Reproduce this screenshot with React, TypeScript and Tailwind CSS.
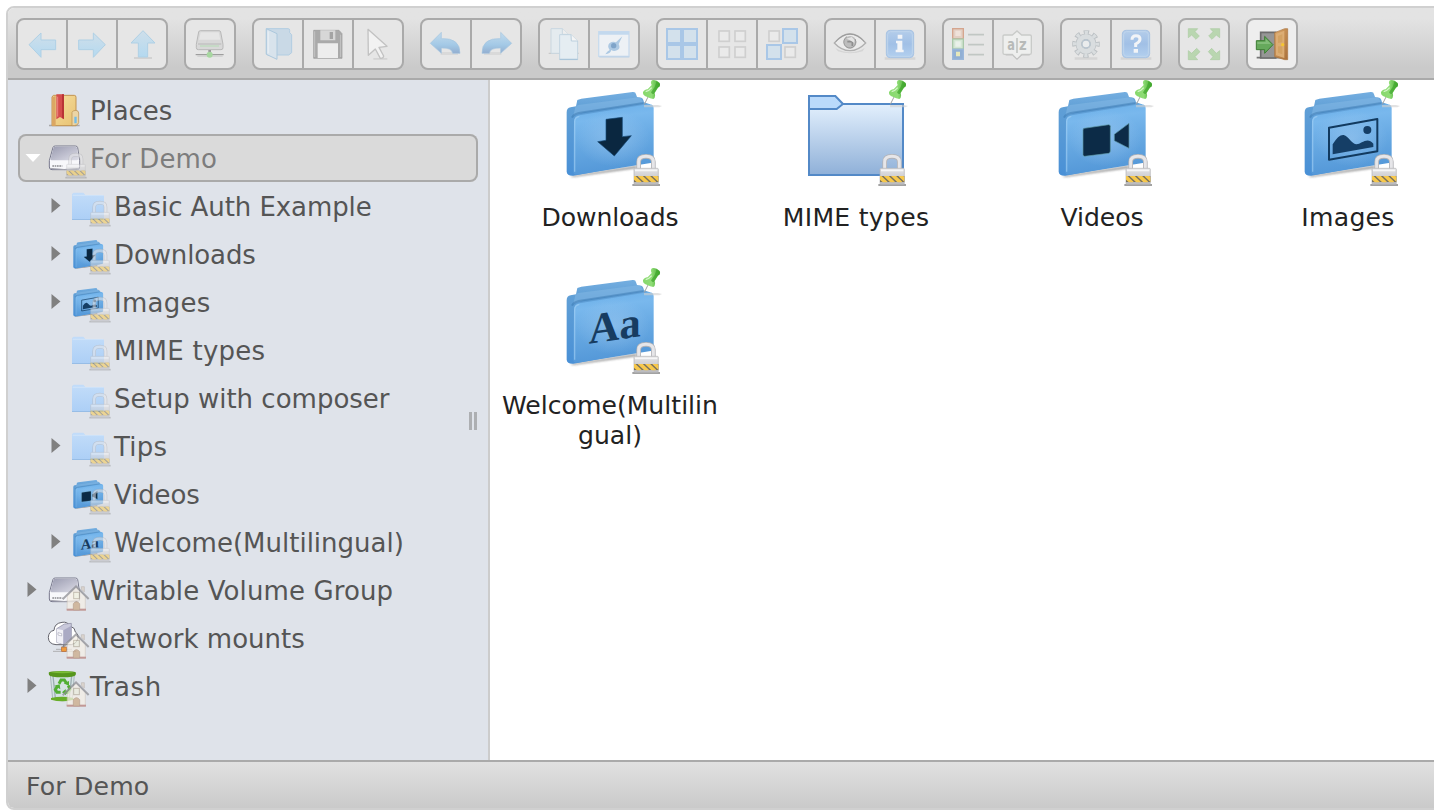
import React from "react";

type Glyph = "down" | "video" | "image" | "aa";

const Defs = () => (
  <svg className="absolute h-0 w-0" aria-hidden="true">
    <defs>
      <linearGradient id="front" x1="0" y1="0" x2="0.15" y2="1">
        <stop offset="0" stopColor="#67aee9" />
        <stop offset="0.25" stopColor="#79b8ed" />
        <stop offset="0.6" stopColor="#66a8e2" />
        <stop offset="1" stopColor="#5498d8" />
      </linearGradient>
      <radialGradient id="glow" cx="0.5" cy="0.5" r="0.5">
        <stop offset="0" stopColor="#a5cdf2" stopOpacity="0.5" />
        <stop offset="1" stopColor="#a5cdf2" stopOpacity="0" />
      </radialGradient>
      <linearGradient id="back" x1="0" y1="0" x2="0" y2="1">
        <stop offset="0" stopColor="#74aee0" />
        <stop offset="0.2" stopColor="#609fd6" />
        <stop offset="1" stopColor="#4990d6" />
      </linearGradient>
      <linearGradient id="plain" x1="0" y1="0" x2="0" y2="1">
        <stop offset="0" stopColor="#e3f0fd" />
        <stop offset="1" stopColor="#8fb0d8" />
      </linearGradient>
      <linearGradient id="soft" x1="0" y1="0" x2="0" y2="1">
        <stop offset="0" stopColor="#c2dcf9" />
        <stop offset="1" stopColor="#accff6" />
      </linearGradient>
      <linearGradient id="metal" x1="0" y1="0" x2="0" y2="1">
        <stop offset="0" stopColor="#e4e4e6" />
        <stop offset="1" stopColor="#bcbcc0" />
      </linearGradient>
      <linearGradient id="diskTop" x1="0" y1="0" x2="1" y2="1">
        <stop offset="0" stopColor="#9a9bb0" />
        <stop offset="1" stopColor="#dedee8" />
      </linearGradient>
      <linearGradient id="gold" x1="0" y1="0" x2="1" y2="1">
        <stop offset="0" stopColor="#f6dfa0" />
        <stop offset="1" stopColor="#e8c272" />
      </linearGradient>
      <linearGradient id="sky" x1="0" y1="0" x2="0" y2="1">
        <stop offset="0" stopColor="#cfdfea" />
        <stop offset="1" stopColor="#b4d9f0" />
      </linearGradient>
      <linearGradient id="undo" x1="0" y1="0" x2="0" y2="1">
        <stop offset="0" stopColor="#c3dbed" />
        <stop offset="0.6" stopColor="#a3c9e6" />
        <stop offset="1" stopColor="#93aed0" />
      </linearGradient>
      <linearGradient id="info" x1="0" y1="0" x2="0" y2="1">
        <stop offset="0" stopColor="#b4cdea" />
        <stop offset="0.5" stopColor="#a1c0e6" />
        <stop offset="1" stopColor="#b3d0ef" />
      </linearGradient>
      <linearGradient id="door" x1="0" y1="0" x2="1" y2="1">
        <stop offset="0" stopColor="#dba768" />
        <stop offset="1" stopColor="#a9703a" />
      </linearGradient>
      <linearGradient id="pin" x1="0" y1="0" x2="1" y2="0">
        <stop offset="0" stopColor="#86d86c" />
        <stop offset="0.5" stopColor="#8fdc76" />
        <stop offset="1" stopColor="#43a82e" />
      </linearGradient>
      <filter id="blur2" x="-20%" y="-50%" width="140%" height="200%">
        <feGaussianBlur stdDeviation="3" />
      </filter>
      <clipPath id="stripes">
        <rect x="432" y="303" width="73" height="19" />
      </clipPath>
    </defs>
  </svg>
);

/* ---------- volume and folder artwork ---------- */

const Lock = () => (
  <g>
    <path d="M427 327h83v6h-83z" fill="#8b8b8b" opacity="0.8" />
    <path d="M446 284V260Q446 244 468 244Q490 244 490 260V284" fill="none" stroke="#b3b3b7" strokeWidth="14" />
    <path d="M446 284V260Q446 244 468 244Q490 244 490 260V284" fill="none" stroke="#e6e6e9" strokeWidth="9" />
    <rect x="432" y="280" width="73" height="48" rx="3" fill="url(#metal)" stroke="#b3b3b7" strokeWidth="2" />
    <path d="M435 286h67" stroke="#f6f6f7" strokeWidth="5" />
    <g clipPath="url(#stripes)">
      <path d="M430 303h78v19h-78z" fill="#77705f" />
      <path d="M425 300l26 24M447 300l26 24M469 300l26 24M491 300l26 24" stroke="#f7c84c" strokeWidth="11" />
    </g>
  </g>
);

const Pin = () => (
  <g>
    <path d="M462 90h42l12 3-8 4h-46z" fill="#cfcfcf" opacity="0.6" />
    <path d="M474 66L463 88" stroke="#a3a3a3" strokeWidth="3" />
    <path d="M486 16Q497 12 509 24Q513 33 504 38L494 54Q498 66 490 72Q480 71 472 66Q458 62 459 52Q462 44 473 43L485 30Q480 20 486 16Z" fill="url(#pin)" />
    <path d="M500 19Q512 26 509 34L502 38L492 56Q486 59 483 52L494 36Z" fill="#3fa52c" opacity="0.7" />
    <path d="M467 50Q477 48 485 38" stroke="#d5f5c9" strokeWidth="4" fill="none" />
  </g>
);

const GlyphArt = ({ kind }: { kind: Glyph }) => {
  if (kind === "down")
    return (
      <path d="M348 133L397 127V185L424 182L373 243L323 200L348 196Z" fill="#0a2740" stroke="#174a77" strokeWidth="2" />
    );
  if (kind === "video")
    return (
      <g fill="#0c2b47" stroke="#5d99a6" strokeWidth="2">
        <path d="M306 160L380 149Q385 149 385 154V228Q385 234 380 235L308 244Q303 244 303 238V165Q303 161 306 160Z" />
        <path d="M397 178L441 145V220L397 197Z" />
      </g>
    );
  if (kind === "image")
    return (
      <g>
        <path d="M303 158L448 132V229L303 254Z" fill="none" stroke="#123a5f" strokeWidth="6" strokeLinejoin="round" />
        <path d="M314 208Q332 178 347 180C362 184 372 208 386 208C400 207 418 184 436 206V216L314 238Z" fill="#153e66" />
        <circle cx="418" cy="165" r="12" fill="#153e66" />
      </g>
    );
  return (
    <text
      transform="matrix(1 -0.14 0 1 296 242)"
      fontFamily="'Liberation Serif', serif"
      fontSize="130"
      fontWeight="700"
      textLength="156"
      lengthAdjust="spacingAndGlyphs"
      x="0"
      y="0"
      fill="#173c61"
    >
      Aa
    </text>
  );
};

const BlueFolder = ({ kind }: { kind: Glyph }) => (
  <g>
    <path d="M240 303L440 272L440 280L250 306Z" fill="#333" opacity="0.5" filter="url(#blur2)" />
    <path d="M230 112Q230 99 242 97L258 94L262 75L274 71L428 51Q437 50 438 58L441 66L454 68Q460 70 462 82L480 88L480 260L250 302Q231 303 230 290Z" fill="url(#back)" />
    <path d="M264 90L450 66L460 84L280 112L250 122L256 96Z" fill="#85b9e6" opacity="0.5" />
    <path d="M246 128Q250 118 266 114L460 84" fill="none" stroke="#2f6ea8" strokeWidth="6" opacity="0.4" />
    <path d="M252 140Q252 124 268 121L474 88Q491 86 491 100V253Q491 262 482 264L262 299Q250 300 250 290Z" fill="url(#front)" />
    <path d="M254 290V140Q254 127 268 124" stroke="#a4d0f5" strokeWidth="4" fill="none" opacity="0.6" />
    <ellipse cx="370" cy="190" rx="110" ry="85" fill="url(#glow)" />
    <GlyphArt kind={kind} />
  </g>
);

const BigIcon = ({ kind }: { kind: Glyph | "plain" }) => (
  <svg viewBox="180 15 360 336" className="h-28 w-[120px] shrink-0">
    {kind === "plain" ? (
      <g strokeWidth="6" stroke="#5389c7">
        <rect x="219" y="87" width="282" height="213" fill="url(#plain)" />
        <path d="M219 63H298L321 87L302 102H219Z" fill="#badafb" />
      </g>
    ) : (
      <BlueFolder kind={kind} />
    )}
    <Pin />
    <Lock />
  </svg>
);

const SmallLock = () => (
  <g transform="matrix(.77 0 0 .8 -276.8 -133)" opacity="0.55">
    <Lock />
  </g>
);

const House = () => (
  <g opacity="0.75">
    <path d="M58 90L84 64L112 90V132H57Z" fill="#f5efe6" stroke="#cdc3b7" strokeWidth="2" />
    <path d="M56 128h58v6h-58z" fill="#b9807a" />
    <path d="M44 100L84 61L122 99" fill="none" stroke="#8f8f94" strokeWidth="6" />
    <path d="M100 62h9v16l-9-8z" fill="#d9cfc5" stroke="#a89c94" strokeWidth="1.5" />
    <rect x="77" y="79" width="17" height="19" fill="#eeeedd" stroke="#b6ad9b" strokeWidth="3" />
    <path d="M76 132V113Q85 101 95 113V132Z" fill="#ccaa88" stroke="#a88970" strokeWidth="2" />
  </g>
);

const Disk = () => (
  <g>
    <path d="M15 40Q16 36 22 36H82Q88 36 89 41L95 80V98Q95 107 88 107H12Q4 107 4 99V80Z" fill="#f8f8fb" stroke="#77788c" strokeWidth="3" />
    <path d="M17 40Q18 38 23 38H81Q86 38 87 42L92 73Q93 79 86 79H13Q6 79 8 73Z" fill="url(#diskTop)" />
    <path d="M13 96h30" stroke="#8c8c91" strokeWidth="5" strokeDasharray="5 2" />
    <path d="M6 103Q48 110 93 103" stroke="#a5a5af" strokeWidth="3" fill="none" />
  </g>
);

type TreeKind = Glyph | "plain" | "places" | "disk" | "group" | "network" | "trash";

const TreeIcon = ({ kind }: { kind: TreeKind }) => {
  let art: React.ReactNode;
  if (kind === "places")
    art = (
      <g>
        <path d="M3 116h92v5h-92z" fill="#84817e" opacity="0.6" />
        <path d="M12 33L16 28H79Q84 28 84 34V119H12Z" fill="url(#gold)" stroke="#c29350" strokeWidth="3" />
        <path d="M12 33V119H23V30Z" fill="#dba763" />
        <path d="M72 79Q74 73 84 73Q92 74 92 81V110Q90 119 72 119Z" fill="#ecd5a5" stroke="#b58b4b" strokeWidth="2" />
        <path d="M79 92h7v20h-7z" fill="#72bce8" />
        <path d="M25 25H48V100L36 93L25 100Z" fill="#d54c4c" />
        <path d="M42 25h6v74l-6-3z" fill="#b93335" />
        <path d="M29 32v60" stroke="#ea8580" strokeWidth="3" />
      </g>
    );
  else if (kind === "disk" || kind === "group")
    art = (
      <>
        <Disk />
        {kind === "disk" ? <SmallLock /> : <House />}
      </>
    );
  else if (kind === "network")
    art = (
      <>
        <path d="M24 92Q1 90 1 70Q2 52 18 49Q19 28 42 25Q58 22 66 36Q83 42 82 54Q94 62 88 78Q84 90 70 92Z" fill="#fff" stroke="#65656d" strokeWidth="3" />
        <path d="M26 44L49 30L70 28L70 76L46 91L26 85Z" fill="#c9c9db" stroke="#86869d" strokeWidth="2" />
        <path d="M26 44L46 49V91L26 85Z" fill="#f0f0f6" />
        <path d="M30 56l11 3v7l-11-3z" fill="#fff" stroke="#9191a5" strokeWidth="1.5" />
        <path d="M46 91V49L70 35V76Z" fill="#aaaac4" />
        <path d="M47 92v12" stroke="#5b5b5b" strokeWidth="3" />
        <path d="M15 112h70M24 106h48" stroke="#9a9a9a" strokeWidth="3" opacity="0.7" />
        <rect x="41" y="99" width="14" height="13" fill="#ef9b3d" stroke="#b8642c" strokeWidth="2" />
        <House />
      </>
    );
  else if (kind === "trash")
    art = (
      <>
        <path d="M7 39H79L73 111Q44 122 14 111Z" fill="#d5e2e4" stroke="#8fa2a5" strokeWidth="2" />
        <path d="M15 42L22 108M71 42L64 108" stroke="#758e91" strokeWidth="4" opacity="0.6" />
        <path d="M2 32Q2 27 43 27Q84 27 84 32L83 39Q79 46 43 46Q7 46 3 39Z" fill="#56961d" />
        <path d="M8 31Q43 25 78 31Q43 37 8 31Z" fill="#7bbd37" />
        <path d="M9 108Q43 101 76 108V113Q43 123 9 113Z" fill="#68ae28" />
        <g fill="none" stroke="#51af34" strokeWidth="9">
          <path d="M33 65L39 54H49L55 63" />
          <path d="M61 71L66 82L60 91H49" />
          <path d="M38 91H27L22 83L29 71" />
        </g>
        <path d="M47 64l16-7v15zM53 81l-11 10 12 9zM19 71l16-4 2 15z" fill="#51af34" />
        <House />
      </>
    );
  else if (kind === "plain")
    art = (
      <>
        <path d="M0 114V36L5 32H34L40 39H91Q96 39 96 43V107L92 114Z" fill="url(#soft)" />
        <path d="M0 111h94v3h-94z" fill="#8eb5df" opacity="0.7" />
        <path d="M2 40H94" stroke="#e0edfb" strokeWidth="3" opacity="0.5" />
        <SmallLock />
      </>
    );
  else
    art = (
      <>
        <g transform="matrix(.343 0 0 .338 -75 13.1)">
          <BlueFolder kind={kind} />
        </g>
        <SmallLock />
      </>
    );
  return (
    <svg viewBox="0 0 120 144" className="h-12 w-10 shrink-0 overflow-visible">
      {art}
    </svg>
  );
};

/* ---------- toolbar artwork: each icon sits in its own 96 unit box ---------- */

const Frame = ({ x, children }: { x: number; children: React.ReactNode }) => (
  <svg viewBox={`${x} 84 96 96`} className="h-8 w-8 shrink-0 overflow-visible">
    {children}
  </svg>
);

const arrowProps = { fill: "url(#sky)", stroke: "#afd0e5", strokeWidth: 3, strokeLinejoin: "round" as const };

const toolbar: React.ReactNode[][] = [
  [
    <Frame x={78}>
      <path d="M87 134L123 99V120H167V149H123V172Z" {...arrowProps} />
    </Frame>,
    <Frame x={228}>
      <path d="M316 134L280 99V120H236V149H280V172Z" {...arrowProps} />
    </Frame>,
    <Frame x={378}>
      <path d="M402 171h54v6h-54z" fill="#c9c9c9" opacity="0.7" />
      <path d="M429 92L465 129H443V171H415V129H393Z" {...arrowProps} />
    </Frame>,
  ],
  [
    <Frame x={582}>
      <path d="M601 92H657Q661 92 662 96L669 133V143Q669 149 663 149H595Q589 149 589 143V133L596 96Q597 92 601 92Z" fill="#d8d8d8" stroke="#b8b8b8" strokeWidth="3" />
      <path d="M602 97h54l5 22h-64z" fill="#e6e6e6" />
      <path d="M594 132h70" stroke="#c3c3c3" strokeWidth="4" />
      <path d="M600 138h57" stroke="#b4dcb4" strokeWidth="3" />
      <path d="M587 164h84" stroke="#919191" strokeWidth="3" />
      <path d="M592 168h76" stroke="#cecece" strokeWidth="5" />
      <path d="M629 150v15" stroke="#999" strokeWidth="8" />
      <circle cx="629" cy="164" r="9" fill="#a7d7a0" />
    </Frame>,
  ],
  [
    <Frame x={786}>
      <path d="M799 86H865Q869 86 869 91V98L875 104V158L866 165H804L799 162Z" fill="#c9d9e6" stroke="#b1cde2" strokeWidth="3" />
      <path d="M799 86L831 101V178L799 163Z" fill="#d8e3ec" stroke="#acc8dd" strokeWidth="3" />
      <path d="M805 94V160" stroke="#e5edf3" strokeWidth="5" />
    </Frame>,
    <Frame x={936}>
      <path d="M941 91H1017L1026 101V175H941Z" fill="#aaa" stroke="#999" strokeWidth="2" />
      <path d="M961 91H1006V121H961Z" fill="#d7d7d7" />
      <path d="M989 96h10v21h-10z" fill="#a4a4a4" />
      <path d="M953 130H1014V174H953Z" fill="#ededed" />
      <path d="M944 94v77M1022 104v67" stroke="#c4c4c4" strokeWidth="3" />
    </Frame>,
    <Frame x={1086}>
      <path d="M1120 174h42v5h-42z" fill="#ccc" opacity="0.7" />
      <path d="M1104 88L1161 139L1137 142L1151 168Q1150 176 1141 175L1126 147L1105 166Z" fill="#f2f2f2" stroke="#c2c2c2" strokeWidth="4" strokeLinejoin="round" />
    </Frame>,
  ],
  [
    <Frame x={60}>
      <path d="M92 156h52v9h-52z" fill="#ccc" opacity="0.5" />
      <path d="M61 130L94 97V116Q150 113 150 160H128Q126 143 94 144V160Z" fill="url(#undo)" stroke="#a6c5e0" strokeWidth="2" strokeLinejoin="round" />
    </Frame>,
    <Frame x={210}>
      <path d="M222 156h52v9h-52z" fill="#ccc" opacity="0.5" />
      <path d="M305 130L272 97V116Q216 113 216 160H238Q240 143 272 144V160Z" fill="url(#undo)" stroke="#a6c5e0" strokeWidth="2" strokeLinejoin="round" />
    </Frame>,
  ],
  [
    <Frame x={414}>
      <path d="M416 160h90" stroke="#cacaca" strokeWidth="4" />
      <path d="M423 86H457L475 103V160H423Z" fill="#e4ebef" stroke="#c9d7e0" strokeWidth="3" />
      <path d="M457 86V103H475" fill="#eee" stroke="#c9d7e0" strokeWidth="3" />
      <path d="M449 104H483L503 123V179H449Z" fill="#e5edf2" stroke="#c3d5e1" strokeWidth="3" />
      <path d="M483 104L484 123H503" fill="#f5f5f5" stroke="#bbcfdd" strokeWidth="3" />
      <path d="M449 178h54" stroke="#aac5d9" strokeWidth="4" />
    </Frame>,
    <Frame x={564}>
      <rect x="566" y="95" width="91" height="74" fill="#edf1f5" stroke="#c9dced" strokeWidth="4" />
      <path d="M566 94h91v10h-91z" fill="#c3d9ee" />
      <path d="M568 171h90" stroke="#b9cfe5" strokeWidth="3" />
      <path d="M586 163Q591 154 599 150Q590 138 599 129Q609 122 618 127L637 109L626 132Q633 146 621 151Q611 156 604 150Q601 161 586 163Z" fill="#adc9e3" />
      <circle cx="611" cy="137" r="8" fill="#7fa4c9" />
    </Frame>,
  ],
  [
    <Frame x={768}>
      <g fill="#d3e1ec" stroke="#a9c7e7" strokeWidth="6">
        <rect x="771" y="87" width="42" height="42" /><rect x="819" y="87" width="42" height="42" />
        <rect x="771" y="135" width="42" height="42" /><rect x="819" y="135" width="42" height="42" />
      </g>
    </Frame>,
    <Frame x={918}>
      <g fill="#eaeaea" stroke="#cfcfcf" strokeWidth="5">
        <rect x="927" y="93" width="31" height="31" /><rect x="975" y="93" width="31" height="31" />
        <rect x="927" y="141" width="31" height="31" /><rect x="975" y="141" width="31" height="31" />
      </g>
    </Frame>,
    <Frame x={1068}>
      <g fill="#eaeaea" stroke="#cfcfcf" strokeWidth="5">
        <rect x="1077" y="93" width="31" height="31" /><rect x="1125" y="141" width="31" height="31" />
      </g>
      <g fill="#d3e1ec" stroke="#a9c7e7" strokeWidth="6">
        <rect x="1119" y="87" width="42" height="42" /><rect x="1071" y="135" width="42" height="42" />
      </g>
    </Frame>,
  ],
  [
    <Frame x={72}>
      <path d="M76 144Q120 170 164 144L158 154Q120 166 84 154Z" fill="#c9c9c9" opacity="0.6" />
      <path d="M73 129Q96 102 120 102Q145 102 167 129Q145 152 120 152Q94 152 73 129Z" fill="#ebebeb" stroke="#b0b0b0" strokeWidth="4" />
      <path d="M77 125Q98 102 120 102Q142 102 163 125" fill="none" stroke="#999" strokeWidth="3" />
      <circle cx="120" cy="127" r="19" fill="#bcbcbc" />
      <path d="M111 110A18 18 0 1 0 135 117" fill="none" stroke="#999" strokeWidth="3" />
      <path d="M112 125h15v13" fill="none" stroke="#8e8e8e" strokeWidth="5" />
      <path d="M109 116l16-5 8 8v10l-14-9z" fill="#e4e4e4" />
    </Frame>,
    <Frame x={222}>
      <path d="M224 172h92v7h-92z" fill="#c9c9c9" opacity="0.6" />
      <rect x="229" y="91" width="82" height="82" rx="12" fill="url(#info)" stroke="#a8c3e2" strokeWidth="3" />
      <rect x="233" y="95" width="74" height="74" rx="9" fill="none" stroke="#bfd5ec" strokeWidth="3" />
      <path d="M263 104h14v12h-14zM258 122h19v27h4v8h-24v-8h5v-19h-4z" fill="#f2f4f7" />
    </Frame>,
  ],
  [
    <Frame x={426}>
      <rect x="428" y="86" width="32" height="30" fill="#e3cfc4" stroke="#d5a58e" strokeWidth="4" />
      <rect x="428" y="117" width="32" height="30" fill="#d4e6d4" stroke="#aac8aa" strokeWidth="4" />
      <rect x="428" y="148" width="32" height="30" fill="#91afd4" stroke="#9bb7da" strokeWidth="4" />
      <path d="M436 92h16v16h-16z" fill="#efe2da" />
      <path d="M436 124h16v16h-16z" fill="#eaf1ea" />
      <path d="M438 155h12v14h-12z" fill="#e6e7bb" />
      <path d="M474 104h48M474 134h48M474 164h48" stroke="#c1c7c4" strokeWidth="5" />
    </Frame>,
    <Frame x={576}>
      <path d="M579 108Q579 105 583 105H607L621 93L635 105H660Q664 105 664 109V158Q664 163 659 163H635L621 178L607 163H583Q579 163 579 158Z" fill="#eeefee" stroke="#c9cbc9" strokeWidth="4" />
      <path d="M587 165h20l14 12 15-12h23" fill="none" stroke="#c2c2c2" strokeWidth="3" />
      <path d="M621 114v45" stroke="#b8bbb9" strokeWidth="4" />
      <text x="592" y="150" fontFamily="'DejaVu Sans', sans-serif" fontWeight="700" fontSize="46" textLength="23" lengthAdjust="spacingAndGlyphs" fill="#b7bab8">a</text>
      <text x="627" y="150" fontFamily="'DejaVu Sans', sans-serif" fontWeight="700" fontSize="46" textLength="23" lengthAdjust="spacingAndGlyphs" fill="#b7bab8">z</text>
    </Frame>,
  ],
  [
    <Frame x={780}>
      <path d="M794 172h68v7h-68z" fill="#c9c9c9" opacity="0.6" />
      <circle cx="828" cy="132" r="35" fill="none" stroke="#bcc1c4" strokeWidth="13" strokeDasharray="16 11.49" strokeDashoffset="8" />
      <circle cx="828" cy="132" r="22" fill="none" stroke="#c0c5c8" strokeWidth="19" />
      <circle cx="828" cy="132" r="22" fill="none" stroke="#d9dddf" strokeWidth="14" />
      <circle cx="828" cy="132" r="34" fill="none" stroke="#d9dddf" strokeWidth="11" strokeDasharray="9.5 17.2" strokeDashoffset="4.75" />
      <circle cx="828" cy="132" r="12" fill="#eaeced" stroke="#b6c3ce" strokeWidth="4" />
    </Frame>,
    <Frame x={930}>
      <path d="M932 172h92v7h-92z" fill="#c9c9c9" opacity="0.6" />
      <rect x="937" y="91" width="82" height="82" rx="12" fill="url(#info)" stroke="#a8c3e2" strokeWidth="3" />
      <rect x="941" y="95" width="74" height="74" rx="9" fill="none" stroke="#bfd5ec" strokeWidth="3" />
      <path d="M966 119Q966 107 978 107Q990 107 990 117Q990 126 977 132V141" fill="none" stroke="#f2f4f7" strokeWidth="9" />
      <path d="M971 147h13v11h-13z" fill="#f2f4f7" />
    </Frame>,
  ],
  [
    <Frame x={1134}>
      <g fill="#b9d6b0" stroke="#aacca2" strokeWidth="2">
        <path d="M1135 86H1163L1155 95L1168 108L1158 118L1145 105L1135 113Z" />
        <path d="M1229 86H1201L1209 95L1196 108L1206 118L1219 105L1229 113Z" />
        <path d="M1135 179H1163L1155 170L1170 155L1160 145L1145 160L1135 152Z" />
        <path d="M1229 179H1201L1209 170L1195 155L1205 145L1219 160L1229 152Z" />
      </g>
    </Frame>,
  ],
  [
    <Frame x={1338}>
      <path d="M1340 173h84" stroke="#777" strokeWidth="5" />
      <path d="M1352 97H1397V174H1352Z" fill="#969696" stroke="#6c6c6c" strokeWidth="5" />
      <path d="M1394 98L1424 86H1433V179H1424L1394 170Z" fill="url(#door)" stroke="#ab7641" strokeWidth="2" />
      <path d="M1398 101L1423 92V174L1398 166Z" fill="#dcad74" />
      <path d="M1404 108L1417 103V127L1404 129ZM1404 139L1417 139V163L1404 158Z" fill="#d3a263" />
      <circle cx="1418" cy="134" r="5" fill="#f5c531" />
      <path d="M1339 122H1364V109L1389 134L1364 160V149H1339Z" fill="#66a95c" stroke="#3e7e34" strokeWidth="3" strokeLinejoin="round" />
      <path d="M1342 126H1367V116L1383 132H1342Z" fill="#8fc584" opacity="0.7" />
    </Frame>,
  ],
];

interface TreeRow {
  label: string;
  kind: TreeKind;
  child?: boolean;
  arrow?: boolean;
  active?: boolean;
  tracking?: string;
}

const tree: TreeRow[] = [
  { label: "Places", kind: "places", tracking: "tracking-[-0.1px]" },
  { label: "For Demo", kind: "disk", arrow: true, active: true, tracking: "tracking-[0.1px]" },
  { label: "Basic Auth Example", kind: "plain", child: true, arrow: true, tracking: "tracking-[-0.08px]" },
  { label: "Downloads", kind: "down", child: true, arrow: true, tracking: "tracking-[-0.12px]" },
  { label: "Images", kind: "image", child: true, arrow: true, tracking: "tracking-[0.25px]" },
  { label: "MIME types", kind: "plain", child: true, tracking: "tracking-[0.25px]" },
  { label: "Setup with composer", kind: "plain", child: true },
  { label: "Tips", kind: "plain", child: true, arrow: true, tracking: "tracking-[0.2px]" },
  { label: "Videos", kind: "video", child: true, tracking: "tracking-[-0.12px]" },
  { label: "Welcome(Multilingual)", kind: "aa", child: true, arrow: true },
  { label: "Writable Volume Group", kind: "group", arrow: true, tracking: "tracking-[0.12px]" },
  { label: "Network mounts", kind: "network" },
  { label: "Trash", kind: "trash", arrow: true, tracking: "tracking-[0.6px]" },
];

const files: { label: string; kind: Glyph | "plain"; tracking: string }[] = [
  { label: "Downloads", kind: "down", tracking: "tracking-[-0.1px]" },
  { label: "MIME types", kind: "plain", tracking: "tracking-[0.28px]" },
  { label: "Videos", kind: "video", tracking: "tracking-[-0.1px]" },
  { label: "Images", kind: "image", tracking: "tracking-[0.3px]" },
  { label: "Welcome(Multilingual)", kind: "aa", tracking: "tracking-[0.02px]" },
];

const Row = ({ row }: { row: TreeRow }) => (
  <div
    className={`flex h-12 items-center rounded-lg ${row.active ? "bg-[#dadada] text-[#7d7d7d] shadow-[inset_0_0_0_2px_#aaa]" : "text-[#555]"} ${row.child ? "pl-6" : ""}`}
  >
    <svg viewBox="0 0 30 48" className="h-12 w-[30px] shrink-0">
      {row.arrow &&
        (row.active ? (
          <path d="M7.5 20H22.5L15 28Z" fill="#fff" />
        ) : (
          <path d="M9.5 16V31L18.5 23.5Z" fill="#808080" />
        ))}
    </svg>
    <TreeIcon kind={row.kind} />
    <span className={`ml-0.5 whitespace-nowrap text-[26px] leading-[46px] pt-0.5 ${row.tracking ?? "tracking-normal"}`}>{row.label}</span>
  </div>
);

export default function App() {
  return (
    <div className="h-[812px] w-full overflow-hidden bg-white pl-1.5 pt-1.5 font-['DejaVu_Sans',Verdana,sans-serif]">
      <Defs />
      <div className="flex h-[804px] w-[1500px] flex-col overflow-hidden rounded-lg border-2 border-[#d0d0d0] bg-white">
        <header className="flex h-[72px] shrink-0 items-start gap-4 border-b-2 border-[#aaa] bg-linear-to-b from-[#e3e3e3] from-15% to-[#cacaca] to-85% pl-2 pt-2.5">
          {toolbar.map((group, i) => (
            <div
              key={i}
              className={`flex h-[52px] divide-x-2 divide-[#aaa] overflow-hidden rounded-lg border-2 border-[#aaa] ${i === 10 ? "bg-[#eee]" : "bg-[#e6e6e6]"}`}
            >
              {group.map((icon, j) => (
                <button key={j} className={`flex items-center justify-center ${j < group.length - 1 ? "w-[50px]" : "w-12"}`}>
                  {icon}
                </button>
              ))}
            </div>
          ))}
        </header>

        <main className="flex min-h-0 flex-1">
          <nav className="relative w-[482px] shrink-0 border-r-2 border-[#ccc] bg-[#dfe3ea] px-2.5 pt-1.5">
            {tree.map((row) => (
              <Row key={row.label} row={row} />
            ))}
            <div className="absolute right-[11px] top-[332px] flex h-[18px] w-2 justify-between">
              <span className="w-[3px] bg-[#adafb2]" />
              <span className="w-[3px] bg-[#adafb2]" />
            </div>
          </nav>
          <section className="grid grid-cols-[repeat(4,240px)] content-start gap-x-1.5">
            {files.map((file) => (
              <figure key={file.label} className="flex h-[188px] flex-col items-center">
                <BigIcon kind={file.kind} />
                <figcaption className={`mt-[11px] w-[220px] break-all text-center text-[25.1px] leading-[30px] text-[#222] ${file.tracking}`}>
                  {file.label}
                </figcaption>
              </figure>
            ))}
          </section>
        </main>

        <footer className="h-12 shrink-0 border-t-2 border-[#aaa] bg-linear-to-b from-[#e1e1e1] to-[#cacaca] pl-[18px] text-[25.2px] leading-[50px] tracking-[0.15px] text-[#555]">
          For Demo
        </footer>
      </div>
    </div>
  );
}
